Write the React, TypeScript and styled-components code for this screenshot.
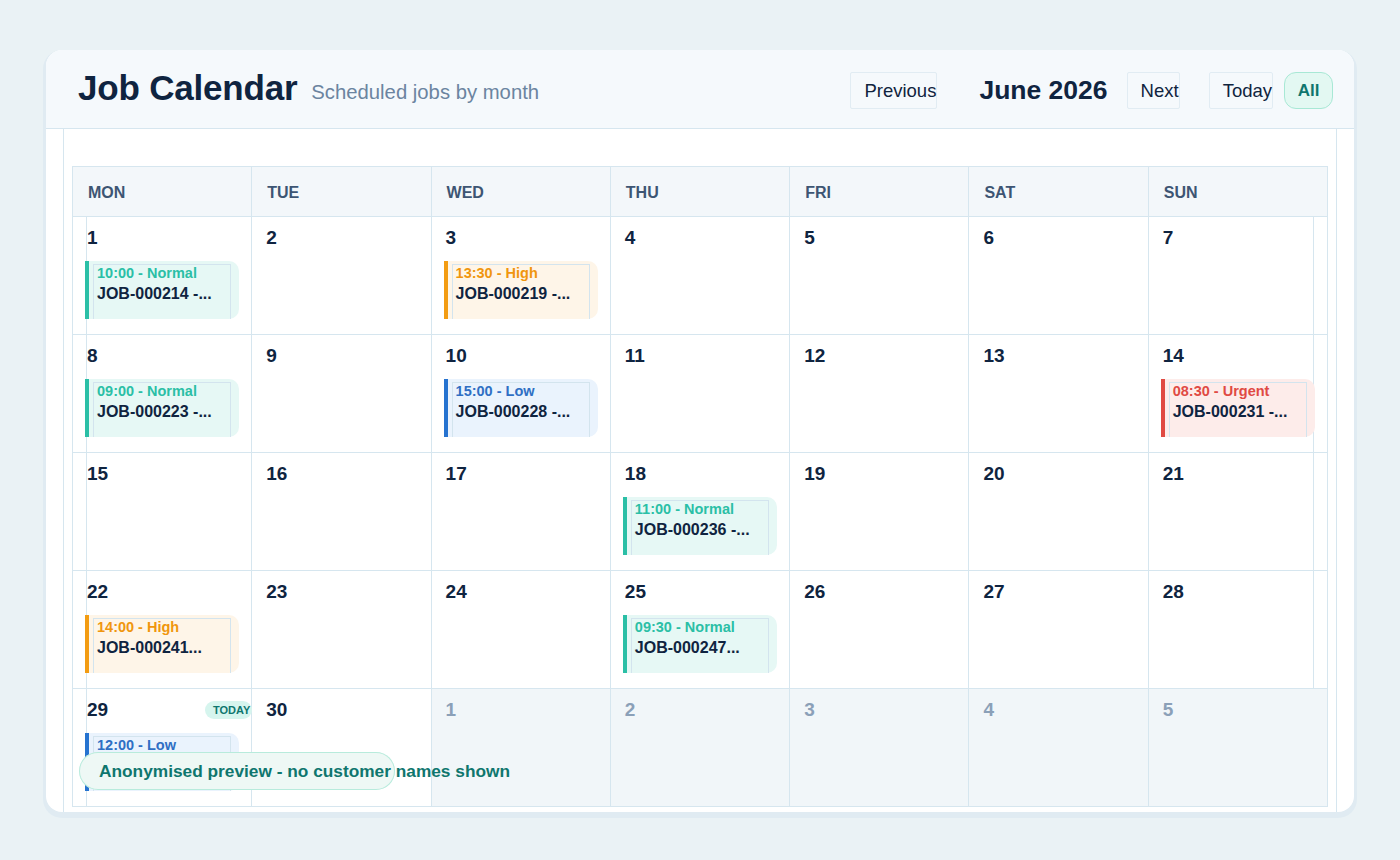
import React from "react";
import styled, { createGlobalStyle, css } from "styled-components";

const GlobalStyle = createGlobalStyle`
  html, body { margin: 0; padding: 0; background: #eaf2f5; }
  body { font-family: "Liberation Sans", Arial, sans-serif; color: #0f2440; }
  * { box-sizing: border-box; }
`;

type Priority = "Normal" | "High" | "Low" | "Urgent";

const palette: Record<Priority, { bar: string; text: string; bg: string }> = {
  Normal: { bar: "#2bbfa6", text: "#2bbfa6", bg: "#e6f8f5" },
  High: { bar: "#f39c12", text: "#f0960e", bg: "#fef5e8" },
  Low: { bar: "#2673d0", text: "#2f6fc4", bg: "#eaf3fd" },
  Urgent: { bar: "#e04a43", text: "#e04a43", bg: "#fdecea" },
};

const Page = styled.div`
  width: 1400px;
  height: 860px;
  padding: 50px 46px 0 46px;
`;

const Card = styled.div`
  position: relative;
  height: 762px;
  background: #ffffff;
  border-radius: 16px;
  box-shadow: 0 3px 0 3px #e0ebf2;
  overflow: hidden;
`;

const Header = styled.header`
  height: 79px;
  display: flex;
  align-items: center;
  padding: 0 21px 3px 32px;
  background: #f5f9fc;
  border-bottom: 1px solid #d6e6ef;
`;

const Title = styled.h1`
  margin: 0;
  font-size: 35px;
  font-weight: 700;
  color: #0f2440;
  letter-spacing: -0.2px;
`;

const Subtitle = styled.span`
  margin-left: 14px;
  margin-top: 10px;
  font-size: 20.3px;
  color: #6b84a0;
`;

const Controls = styled.div`
  margin-left: auto;
  padding-top: 6px;
  display: flex;
  align-items: center;
`;

const NavButton = styled.button<{ $active?: boolean; $gap?: number }>`
  height: 37px;
  margin-left: ${(p) => p.$gap ?? 0}px;
  padding: 0 0 0 13px;
  border: 1px solid #e1ecf3;
  border-radius: 2px;
  background: transparent;
  font-family: "Liberation Sans", Arial, sans-serif;
  font-size: 18.5px;
  color: #10243e;
  white-space: nowrap;
  cursor: pointer;
  ${(p) =>
    p.$active &&
    css`
      width: 49px;
      padding: 0;
      border: 1px solid #a8e8d5;
      border-radius: 12px;
      background: #e3f8f2;
      color: #0f766e;
      font-size: 17px;
      font-weight: 700;
    `}
`;

const MonthLabel = styled.div`
  margin-left: 42px;
  font-size: 26.5px;
  font-weight: 700;
  color: #0f2440;
`;

const Body = styled.div`
  position: relative;
  margin: 0 17px;
  height: 683px;
  padding: 37px 8px 0 8px;
  border-left: 1px solid #d6e6ef;
  border-right: 1px solid #d6e6ef;
`;

const Grid = styled.div`
  display: grid;
  grid-template-columns: repeat(7, 1fr);
  grid-template-rows: 50px repeat(5, 118px);
  border-top: 1px solid #d6e6ef;
  border-left: 1px solid #d6e6ef;
`;

const WeekDay = styled.div`
  display: flex;
  align-items: center;
  padding: 2px 0 0 15px;
  background: #f3f7fa;
  border-right: 1px solid #d6e6ef;
  border-bottom: 1px solid #d6e6ef;
  font-size: 16px;
  font-weight: 700;
  color: #3d5573;
`;

/* thin guide rule drawn inside the first and last columns */
const Cell = styled.div<{ $muted?: boolean; $guide?: "left" | "right" }>`
  position: relative;
  display: flex;
  flex-direction: column;
  padding: 10px 12px 0 12px;
  background: ${(p) => (p.$muted ? "#f1f6f9" : "#ffffff")};
  border-right: 1px solid #d6e6ef;
  border-bottom: 1px solid #d6e6ef;
  ${(p) =>
    p.$guide &&
    css`
      &::after {
        content: "";
        position: absolute;
        top: 0;
        bottom: -1px;
        ${p.$guide === "left" ? "left: 13px;" : "right: 13px;"}
        width: 1px;
        background: #d6e6ef;
        pointer-events: none;
      }
    `}
`;

const CellTop = styled.div`
  display: flex;
  align-items: center;
  justify-content: space-between;
  height: 22px;
  padding-left: 2px;
`;

const DayNumber = styled.span<{ $muted?: boolean }>`
  font-size: 19px;
  font-weight: 700;
  color: ${(p) => (p.$muted ? "#8ba0b8" : "#0f2440")};
`;

const TodayBadge = styled.span`
  position: relative;
  z-index: 1;
  margin-right: -13px;
  padding: 3px 2px 3px 8px;
  border-radius: 10px;
  background: #d6f5ee;
  font-size: 11px;
  font-weight: 700;
  color: #0f766e;
`;

const Event = styled.div<{ $p: Priority }>`
  position: relative;
  z-index: 1;
  margin-top: 12px;
  height: 58px;
  display: flex;
  border-left: 4px solid ${(p) => palette[p.$p].bar};
  border-radius: 0 10px 10px 0;
  background: ${(p) => palette[p.$p].bg};
`;

const EventBody = styled.div`
  flex: 1;
  margin: 3px 8px 0 4px;
  padding: 0 0 0 3px;
  border: 1px solid #d3e4ee;
  border-bottom: none;
  overflow: hidden;
`;

const EventTime = styled.div<{ $p: Priority }>`
  font-size: 14.5px;
  font-weight: 700;
  line-height: 17px;
  color: ${(p) => palette[p.$p].text};
`;

const EventTitle = styled.div`
  margin-top: 3px;
  font-size: 16px;
  font-weight: 700;
  line-height: 18px;
  color: #0f2440;
  white-space: nowrap;
`;

const Notice = styled.div`
  position: absolute;
  z-index: 2;
  left: 15px;
  top: 623px;
  width: 316px;
  height: 38px;
  display: flex;
  align-items: center;
  padding-left: 20px;
  border-radius: 19px;
  background: #eef8f5;
  box-shadow: inset 0 0 0 1px #b8ebdc;
  white-space: nowrap;
  font-size: 17.3px;
  font-weight: 700;
  color: #0f766e;
`;

type Job = { time: string; priority: Priority; title: string };

const jobs: Record<number, Job> = {
  1: { time: "10:00", priority: "Normal", title: "JOB-000214 -..." },
  3: { time: "13:30", priority: "High", title: "JOB-000219 -..." },
  8: { time: "09:00", priority: "Normal", title: "JOB-000223 -..." },
  10: { time: "15:00", priority: "Low", title: "JOB-000228 -..." },
  14: { time: "08:30", priority: "Urgent", title: "JOB-000231 -..." },
  18: { time: "11:00", priority: "Normal", title: "JOB-000236 -..." },
  22: { time: "14:00", priority: "High", title: "JOB-000241..." },
  25: { time: "09:30", priority: "Normal", title: "JOB-000247..." },
  29: { time: "12:00", priority: "Low", title: "" },
};

const weekdays = ["MON", "TUE", "WED", "THU", "FRI", "SAT", "SUN"];

const days = Array.from({ length: 35 }, (_, i) => {
  const n = i + 1;
  return n <= 30 ? { day: n, muted: false } : { day: n - 30, muted: true };
});

export default function App() {
  return (
    <>
      <GlobalStyle />
      <Page>
        <Card>
          <Header>
            <Title>Job Calendar</Title>
            <Subtitle>Scheduled jobs by month</Subtitle>
            <Controls>
              <NavButton>Previous</NavButton>
              <MonthLabel>June 2026</MonthLabel>
              <NavButton $gap={19}>Next</NavButton>
              <NavButton $gap={29}>Today</NavButton>
              <NavButton $gap={11} $active>
                All
              </NavButton>
            </Controls>
          </Header>
          <Body>
            <Grid>
              {weekdays.map((d) => (
                <WeekDay key={d}>{d}</WeekDay>
              ))}
              {days.map(({ day, muted }, i) => {
                const job = muted ? undefined : jobs[day];
                const col = i % 7;
                const guide =
                  col === 0 ? "left" : col === 6 && !muted ? "right" : undefined;
                return (
                  <Cell key={i} $muted={muted} $guide={guide}>
                    <CellTop>
                      <DayNumber $muted={muted}>{day}</DayNumber>
                      {!muted && day === 29 && <TodayBadge>TODAY</TodayBadge>}
                    </CellTop>
                    {job && (
                      <Event $p={job.priority}>
                        <EventBody>
                          <EventTime $p={job.priority}>
                            {job.time} - {job.priority}
                          </EventTime>
                          {job.title && <EventTitle>{job.title}</EventTitle>}
                        </EventBody>
                      </Event>
                    )}
                  </Cell>
                );
              })}
            </Grid>
            <Notice>Anonymised preview - no customer names shown</Notice>
          </Body>
        </Card>
      </Page>
    </>
  );
}
